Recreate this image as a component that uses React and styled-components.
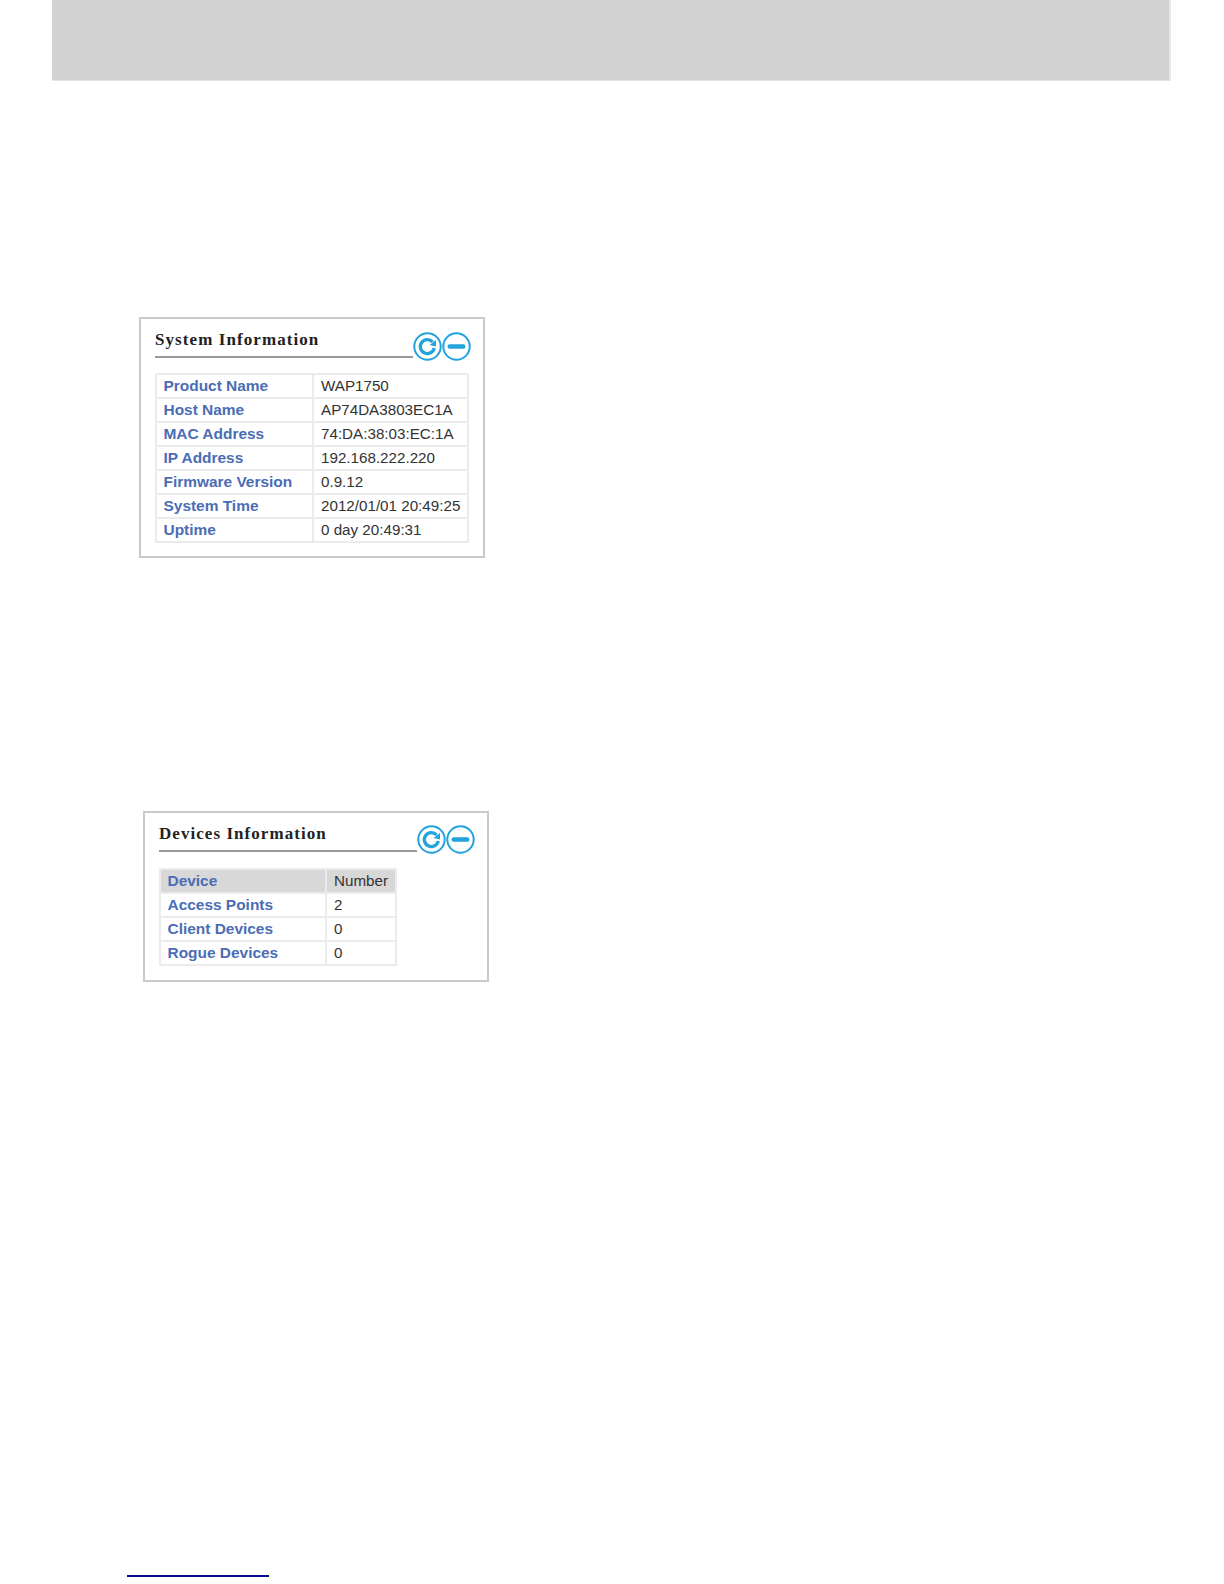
import React from 'react'
import styled, { createGlobalStyle } from 'styled-components'

const GlobalStyle = createGlobalStyle`
  html, body {
    margin: 0;
    padding: 0;
    background: #fff;
    font-family: "Liberation Sans", Arial, sans-serif;
  }
`

const Page = styled.div`
  width: 1224px;
  height: 1584px;
  overflow: hidden;
  display: flex;
  flex-direction: column;
`

const TopBand = styled.div`
  box-sizing: border-box;
  margin-left: 52px;
  width: 1119px;
  height: 81px;
  flex: none;
  background: #d2d2d2;
  border-right: 2px solid #e8e8e8;
  border-bottom: 1px solid #e4e4e4;
`

const Card = styled.section`
  box-sizing: border-box;
  flex: none;
  margin-left: ${p => p.$left}px;
  margin-top: ${p => p.$top}px;
  width: 346px;
  height: ${p => p.$height}px;
  border: 2px solid #c9c9c9;
  padding: 0 14px;
`

const CardHead = styled.div`
  display: flex;
  align-items: flex-start;
  height: ${p => p.$height || 55}px;
`

const TitleBlock = styled.div`
  box-sizing: border-box;
  flex: none;
  width: 258px;
  height: 32px;
  margin-top: 7px;
  padding-top: 3px;
  border-bottom: 2px solid #999;
`

const Title = styled.h2`
  margin: 0;
  font-family: "Liberation Serif", "Times New Roman", serif;
  font-size: 17px;
  line-height: 22px;
  font-weight: 700;
  letter-spacing: ${p => p.$spacing}px;
  color: #222;
`

const IconRow = styled.div`
  display: flex;
  flex: none;
  margin-top: ${p => p.$top}px;
`

const IconSvg = styled.svg`
  display: block;
  width: 29px;
  height: 29px;
  flex: none;
`

const InfoTable = styled.table`
  border-collapse: collapse;
  table-layout: fixed;
  width: ${p => p.$width}px;
  line-height: 20px;
  border: 2px solid #ebebeb;
`

const Row = styled.tr`
  height: 24px;
  background: ${p => (p.$head ? '#d8d8d8' : '#fff')};
`

const LabelCell = styled.td`
  box-sizing: border-box;
  width: ${p => p.$width}px;
  padding: 0 0 0 6.5px;
  border: 2px solid #ebebeb;
  font-size: 15.45px;
  font-weight: 700;
  color: #4a6db5;
  white-space: nowrap;
`

const ValueCell = styled.td`
  padding: 0 0 0 7px;
  border: 2px solid #ebebeb;
  font-size: 15.2px;
  color: #333;
  white-space: nowrap;
`

const FootRule = styled.div`
  flex: none;
  width: 142px;
  height: 2px;
  margin-left: 127px;
  margin-top: 593px;
  background: #0a0a8c;
`

function RefreshIcon() {
  return (
    <IconSvg viewBox="0 0 29 29">
      <circle cx="14.5" cy="14.5" r="13.2" fill="#fff" stroke="#22a3dc" strokeWidth="2" />
      <path d="M19.6 10 A7 7 0 1 0 21.2 16" fill="none" stroke="#22a3dc" strokeWidth="3.4" />
      <path d="M23 8 L23 14.6 L16.6 13 Z" fill="#22a3dc" />
    </IconSvg>
  )
}

function CollapseIcon() {
  return (
    <IconSvg viewBox="0 0 29 29">
      <circle cx="14.5" cy="14.5" r="13.2" fill="#fff" stroke="#22a3dc" strokeWidth="2" />
      <rect x="5.5" y="12.2" width="18" height="4.6" rx="2.3" fill="#22a3dc" />
    </IconSvg>
  )
}

const systemRows = [
  ['Product Name', 'WAP1750'],
  ['Host Name', 'AP74DA3803EC1A'],
  ['MAC Address', '74:DA:38:03:EC:1A'],
  ['IP Address', '192.168.222.220'],
  ['Firmware Version', '0.9.12'],
  ['System Time', '2012/01/01 20:49:25'],
  ['Uptime', '0 day 20:49:31'],
]

const deviceRows = [
  ['Access Points', '2'],
  ['Client Devices', '0'],
  ['Rogue Devices', '0'],
]

function PanelHead({ title, spacing, height, iconTop }) {
  return (
    <CardHead $height={height}>
      <TitleBlock>
        <Title $spacing={spacing}>{title}</Title>
      </TitleBlock>
      <IconRow $top={iconTop}>
        <RefreshIcon />
        <CollapseIcon />
      </IconRow>
    </CardHead>
  )
}

export default function App() {
  return (
    <Page>
      <GlobalStyle />
      <TopBand />

      <Card $left={139} $top={236} $height={241}>
        <PanelHead title="System Information" spacing={1.08} height={54} iconTop={13} />
        <InfoTable $width={314}>
          <tbody>
            {systemRows.map(([label, value]) => (
              <Row key={label}>
                <LabelCell $width={157}>{label}</LabelCell>
                <ValueCell>{value}</ValueCell>
              </Row>
            ))}
          </tbody>
        </InfoTable>
      </Card>

      <Card $left={143} $top={253} $height={171}>
        <PanelHead title="Devices Information" spacing={1.05} height={55} iconTop={12} />
        <InfoTable $width={238}>
          <tbody>
            <Row $head>
              <LabelCell $width={166}>Device</LabelCell>
              <ValueCell>Number</ValueCell>
            </Row>
            {deviceRows.map(([label, value]) => (
              <Row key={label}>
                <LabelCell $width={166}>{label}</LabelCell>
                <ValueCell>{value}</ValueCell>
              </Row>
            ))}
          </tbody>
        </InfoTable>
      </Card>

      <FootRule />
    </Page>
  )
}
